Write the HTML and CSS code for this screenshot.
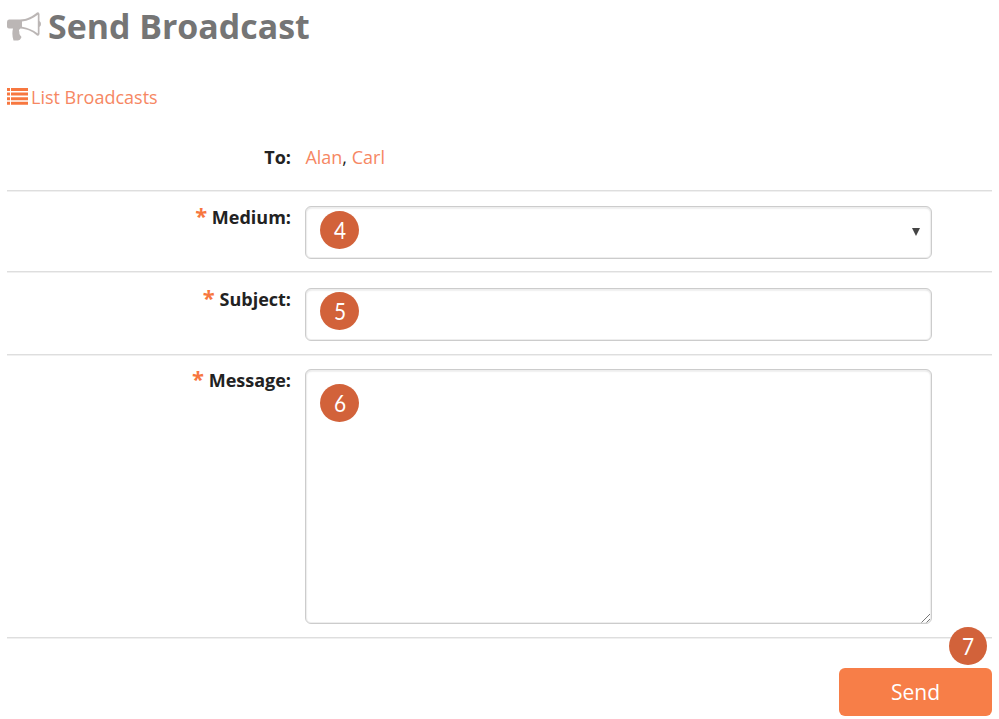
FILE: index.html
```html
<!DOCTYPE html>
<html lang="en">
<head>
<meta charset="utf-8">
<title>Send Broadcast</title>
<link rel="stylesheet" href="styles.css">
</head>
<body>
<main class="page">
  <h1 class="title">
    <svg class="horn" viewBox="0 0 34 30" width="34" height="30" aria-hidden="true">
      <path fill-rule="evenodd" d="M2 7.500H13C20 7.500 26 4 30 .5Q32 -.5 32.500 2V9Q34 10 34 12T32.500 15V22Q32 24.500 30 23.500C25 19 20 17 13.500 16.500Q11 18 12.500 20Q11.500 22 14.500 25Q13 29 10 28.500H6.500Q4.500 22 6 16.500H2Q0 16.500 0 14.500V10Q0 7.500 2 7.500ZM15 9.500V14.700C21 15.500 26 18 30.800 21.500V2.800C26 6.500 21 9 15 9.500Z"/>
    </svg>
    <span class="title-text">Send Broadcast</span>
  </h1>
  <a class="list-link">
    <svg class="list-icon" viewBox="0 0 21 17" width="21" height="17" aria-hidden="true">
      <path d="M0 0h3v3H0zM4 0h17v3H4zM0 4.600h3v3H0zM4 4.600h17v3H4zM0 9.200h3v3H0zM4 9.200h17v3H4zM0 13.800h3v3H0zM4 13.800h17v3H4z"/>
    </svg>
    <span class="link-text">List Broadcasts</span>
  </a>
  <form class="form">
    <div class="row row-to">
      <div class="label"><span class="label-text">To:</span></div>
      <div class="recipients"><a>Alan</a>, <a>Carl</a></div>
    </div>
    <div class="row row-medium">
      <div class="label"><span class="star">*</span> <span class="label-text">Medium:</span></div>
      <div class="field"><span class="badge"><span class="digit">4</span></span>
        <svg class="arrow" viewBox="0 0 8 8" width="8" height="8" aria-hidden="true"><path d="M0 0h8L4 8z"/></svg>
      </div>
    </div>
    <div class="row row-subject">
      <div class="label"><span class="star">*</span> <span class="label-text">Subject:</span></div>
      <div class="field"><span class="badge"><span class="digit">5</span></span></div>
    </div>
    <div class="row row-message">
      <div class="label"><span class="star">*</span> <span class="label-text">Message:</span></div>
      <div class="field area"><span class="badge"><span class="digit">6</span></span>
        <svg class="grip" viewBox="0 0 10 10" width="10" height="10" aria-hidden="true"><path d="M.5 9.500l8.500-8.500M5.500 9.500l3.500-3.500"/></svg>
      </div>
    </div>
    <div class="actions">
      <div class="send">Send<span class="badge"><span class="digit">7</span></span></div>
    </div>
  </form>
</main>
</body>
</html>
```
FILE: styles.css
```css
* { box-sizing: border-box; }
body {
  margin: 0;
  background: #fff;
  color: #222;
  font: 18px/24px "Open Sans", sans-serif;
}
.page { padding: 0 7px; height: 719px; overflow: hidden; }
.title {
  display: flex;
  height: 54px;
  margin: 0;
  color: #757575;
  font-size: 33.9px;
  line-height: 52px;
}
.horn { margin: 12px 7px 0 0; fill: #bbb6b5; }
.list-link {
  display: flex;
  height: 24px;
  margin-top: 31px;
  color: #f68763;
}
.list-icon { margin: 3px 3px 0 0; fill: #f7773f; }
.form { margin-top: 24px; }
.row {
  display: grid;
  grid-template-columns: 284px 627px;
  column-gap: 14px;
  border-bottom: 1px solid #dedede;
  box-shadow: 0 1px #f0f0f0;
}
.row-to { height: 58px; padding-top: 12px; }
.row-medium { height: 81px; padding-top: 15px; }
.row-subject { height: 83px; padding-top: 16px; }
.row-message { height: 283px; padding-top: 14px; }
.label { text-align: right; font-weight: 600; white-space: nowrap; }
.row-medium .label, .row-subject .label { margin-top: -1px; }
.label-text { font-weight: 700; }
.row-message .label { margin-top: -1px; }
.star { color: #f7773f; font-size: 22px; line-height: 20px; font-weight: 700; }
.recipients { padding-left: 0.4px; }
.recipients a { color: #f68763; }
.field {
  position: relative;
  height: 53px;
  border: 1px solid #ccc;
  border-radius: 6px;
  box-shadow: inset 0 0 0 1px #eee, inset 0 1px 2px #ccc;
}
.area { height: 255px; }
.badge {
  position: absolute;
  left: 14px;
  top: 4px;
  width: 39px;
  height: 38px;
  border-radius: 50%;
  background: #d2623a;
  color: #fff;
  font: 24px/37px Lato, sans-serif;
  text-align: center;
}
.digit { display: inline-block; transform: scaleX(0.87); }
.row-subject .badge { top: 3px; }
.area .badge { top: 14px; }
.arrow { position: absolute; right: 11px; top: 21px; fill: #444; }
.grip { position: absolute; right: 0; bottom: 0; fill: none; stroke: #777; }
.actions { display: flex; justify-content: flex-end; padding-top: 30px; }
.send {
  position: relative;
  width: 153px;
  height: 48px;
  border-radius: 6px;
  background: #f77e48;
  color: #fff;
  font-size: 21px;
  line-height: 48px;
  text-align: center;
}
.send .badge { left: 110px; top: -41px; width: 38px; }
```
